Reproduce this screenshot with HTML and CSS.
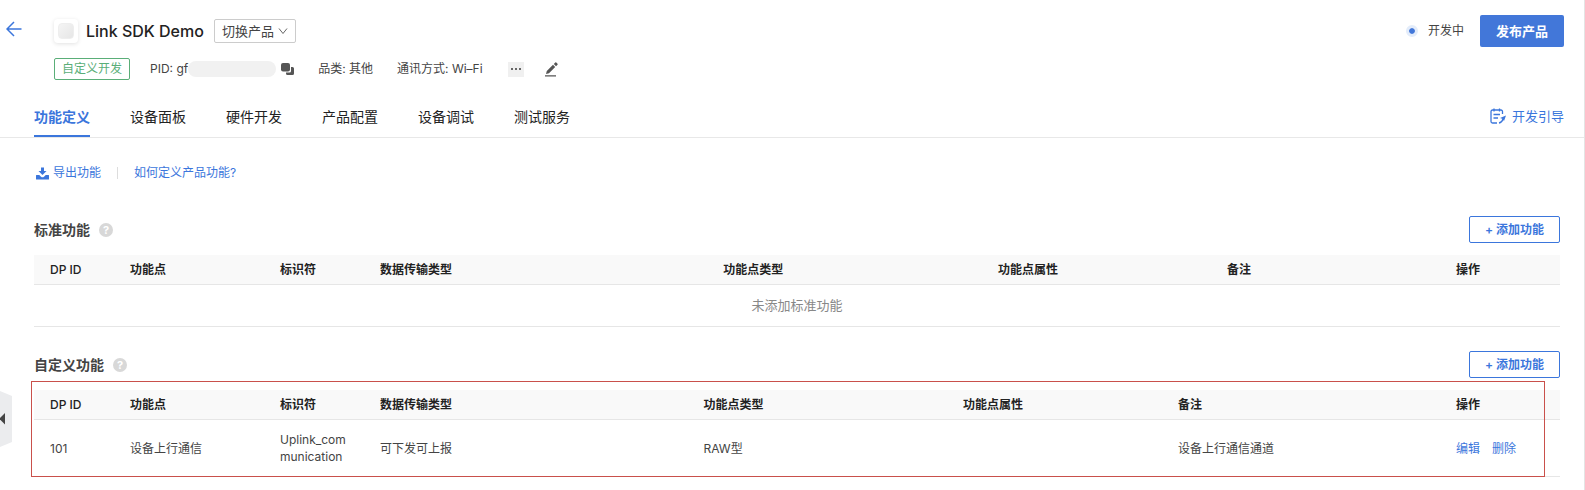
FILE: index.html
```html
<!DOCTYPE html>
<html lang="zh-CN">
    <head>
        <meta charset="utf-8">
        <title>Link SDK Demo</title>
        <link rel="stylesheet" href="styles.css">
    </head>
    <body>
        <div class="page">
            <header class="header">
                <a href="#" class="back" aria-label="返回">
                    <svg width="16" height="16" viewBox="0 0 16 16"><path d="M15.5 8H1M8 1L1 8l7 7"/></svg>
                </a>
                <div class="info">
                    <div class="title-row">
                        <span class="logo"></span>
                        <h1>Link SDK Demo</h1>
                        <label class="switch">
                            <select aria-label="切换产品">
                                <option>切换产品</option>
                            </select>
                            <svg width="10" height="8" viewBox="0 0 10 8"><path d="M1 1.5l4 5 4-5"/></svg>
                        </label>
                    </div>
                    <div class="meta-row">
                        <span class="tag">自定义开发</span>
                        <span class="pid">PID: gf<span class="mask"></span>
                            <svg width="13" height="13" viewBox="0 0 13 13"><path d="M10 4h1.500A1.500 1.500 0 0 1 13 5.500v5a1.500 1.500 0 0 1-1.500 1.500h-5A1.500 1.500 0 0 1 5 10.500V9.500h3.500A1.500 1.500 0 0 0 10 8z"/><rect x="0" y="0" width="9" height="8.500" rx="2"/></svg>
                        </span>
                        <span class="category">品类: 其他</span>
                        <span class="network">通讯方式: Wi–Fi</span>
                        <button class="more" aria-label="更多"><i></i><i></i><i></i></button>
                        <button class="edit" aria-label="编辑">
                            <svg width="13" height="15" viewBox="0 0 13 15"><path d="M0 13.200h11v1.300H0zM1 12l.8-3L8 2.800l2.200 2.200L4 11.200zM8.800 2L10.300.6q.5-.5 1 0l1.200 1.200q.5.500 0 1L11 4.200z"/></svg>
                        </button>
                    </div>
                </div>
                <div class="actions">
                    <span class="status">开发中</span>
                    <button class="publish">发布产品</button>
                </div>
            </header>

            <nav class="tabs">
                <a href="#" class="active">功能定义</a>
                <a href="#">设备面板</a>
                <a href="#">硬件开发</a>
                <a href="#">产品配置</a>
                <a href="#">设备调试</a>
                <a href="#">测试服务</a>
                <a href="#" class="guide">
                    <svg width="16" height="16" viewBox="0 0 16 16"><path d="M12.500 6V3.500A1.500 1.500 0 0 0 11 2H2.500A1.500 1.500 0 0 0 1 3.500v10A1.500 1.500 0 0 0 2.500 15H7M4 .5v3M9.500 .5v3M3.500 6.500h6.500M3.500 10h4.500M9 15q3-.5 4-4"/><path class="fill" d="M16 7.500l-6 2.500 2.200.8L14 13z"/></svg>
                    开发引导
                </a>
            </nav>

            <main class="content">
                <div class="toolbar">
                    <a href="#" class="export">
                        <svg width="13" height="13" viewBox="0 0 13 13"><path d="M5 0.500h3V4h2.500l-4 4-4-4H5zM.5 8h2.800l1.700 1.800q1.500 1 3 0L9.700 8h2.800q.5 0 .5.500v3.500q0 .5-.5.500H.5q-.5 0-.5-.5V8.500q0-.5.500-.5z"/></svg>
                        导出功能
                    </a>
                    <a href="#" class="how">如何定义产品功能?</a>
                </div>

                <section>
                    <div class="section-head">
                        <h2>标准功能</h2>
                        <span class="help">?</span>
                        <button class="add">+ 添加功能</button>
                    </div>
                    <table class="standard">
                        <colgroup>
                            <col class="id"><col class="name"><col class="code"><col class="transfer"><col class="type"><col class="attr"><col><col class="operate">
                        </colgroup>
                        <thead>
                            <tr>
                                <th class="latin">DP ID</th>
                                <th>功能点</th>
                                <th>标识符</th>
                                <th>数据传输类型</th>
                                <th>功能点类型</th>
                                <th>功能点属性</th>
                                <th>备注</th>
                                <th>操作</th>
                            </tr>
                        </thead>
                        <tbody>
                            <tr>
                                <td colspan="8" class="empty">未添加标准功能</td>
                            </tr>
                        </tbody>
                    </table>
                </section>

                <section>
                    <div class="section-head">
                        <h2>自定义功能</h2>
                        <span class="help">?</span>
                        <button class="add">+ 添加功能</button>
                    </div>
                    <div class="marked">
                        <table class="custom">
                            <colgroup>
                                <col class="id"><col class="name"><col class="code"><col class="transfer"><col class="type"><col class="attr"><col><col class="operate">
                            </colgroup>
                            <thead>
                                <tr>
                                    <th class="latin">DP ID</th>
                                    <th>功能点</th>
                                    <th>标识符</th>
                                    <th>数据传输类型</th>
                                    <th>功能点类型</th>
                                    <th>功能点属性</th>
                                    <th>备注</th>
                                    <th>操作</th>
                                </tr>
                            </thead>
                            <tbody>
                                <tr>
                                    <td>101</td>
                                    <td>设备上行通信</td>
                                    <td>Uplink_communication</td>
                                    <td>可下发可上报</td>
                                    <td>RAW型</td>
                                    <td></td>
                                    <td>设备上行通信通道</td>
                                    <td><a href="#">编辑</a><a href="#">删除</a></td>
                                </tr>
                            </tbody>
                        </table>
                    </div>
                </section>
            </main>

            <button class="handle" aria-label="展开">
                <svg width="12" height="56" viewBox="0 0 12 56"><path class="bg" d="M0 0l12 5v46L0 56z"/><path class="arrow" d="M5 22v11.500L0 28.500v-1.500z"/></svg>
            </button>
        </div>
    </body>
</html>
```
FILE: styles.css
```css
*, *::before, *::after {
    box-sizing: border-box;
}
body {
    margin: 0;
    background-color: white;
    color: #444;
    font-family: Inter, "Noto Sans CJK SC", sans-serif;
    font-size: 12px;
    line-height: 16px;
}
a {
    color: #3b76dc;
    text-decoration: none;
}
button, select {
    margin: 0;
    padding: 0;
    border: none;
    background: none;
    color: inherit;
    font: inherit;
    cursor: pointer;
}
svg {
    display: block;
    flex: none;
}
.page {
    position: relative;
    min-height: 100vh;
    border-right: 1px solid #e4e4e4;
}

/* header */
.header {
    display: flex;
    align-items: flex-start;
    padding: 15px 20px 0 6px;
}
.back {
    margin: 6px 32px 0 0;
}
.back svg {
    fill: none;
    stroke: #3b76dc;
    stroke-width: 1.5;
}
.info {
    flex: 1;
}
.title-row {
    display: flex;
    align-items: center;
    height: 32px;
}
.logo {
    width: 24px;
    height: 24px;
    padding: 4px;
    border-radius: 4px;
    box-shadow: 0 1px 4px rgba(0, 0, 0, 0.12);
}
.logo::before {
    content: "";
    display: block;
    height: 16px;
    border-radius: 4px;
    border: 1px solid #eee;
    background: linear-gradient(135deg, #f4f4f4, #e6e6e6);
}
h1 {
    margin: 0 10px 0 8px;
    color: #222;
    font-size: 16px;
    font-weight: 500;
    line-height: 24px;
}
.switch {
    display: grid;
    align-items: center;
}
.switch select {
    grid-area: 1 / 1;
    appearance: none;
    width: 82px;
    height: 24px;
    padding: 0 16px 0 7px;
    border: 1px solid #ccc;
    border-radius: 2px;
    font-size: 13px;
}
.switch svg {
    grid-area: 1 / 1;
    justify-self: end;
    margin-right: 8px;
    fill: none;
    stroke: #666;
    pointer-events: none;
}
.meta-row {
    display: flex;
    align-items: center;
    margin-top: 11px;
    height: 22px;
}
.tag {
    padding: 2px 7px;
    border: 1px solid #5aae78;
    border-radius: 2px;
    color: #5aae78;
}
.pid {
    display: flex;
    align-items: center;
    margin-left: 20px;
}
.mask {
    width: 88px;
    height: 16px;
    margin-right: 5px;
    border-radius: 8px;
    background-color: #f1f1f1;
}
.meta-row svg {
    fill: #555;
}
.category {
    margin-left: 24px;
}
.network {
    margin-left: 24px;
}
.more {
    display: flex;
    align-items: center;
    justify-content: center;
    gap: 2px;
    width: 16px;
    height: 15px;
    margin-left: 25px;
    background-color: #f0f0f0;
}
.more i {
    width: 2px;
    height: 2px;
    background-color: #666;
}
.edit {
    margin-left: 21px;
}
.actions {
    display: flex;
    align-items: center;
    gap: 16px;
}
.status {
    display: flex;
    align-items: center;
    gap: 10px;
}
.status::before {
    content: "";
    width: 12px;
    height: 12px;
    border: 3px solid #e3ecfa;
    border-radius: 50%;
    background: #4277d9 padding-box;
}
.publish {
    width: 84px;
    height: 32px;
    border-radius: 2px;
    background-color: #4277d9;
    color: white;
    font-size: 13px;
    font-weight: 600;
}

/* tabs */
.tabs {
    display: flex;
    gap: 40px;
    margin-top: 17px;
    padding: 0 20px 0 34px;
    border-bottom: 1px solid #e8e8e8;
}
.tabs a {
    height: 40px;
    border-bottom: 2px solid transparent;
    color: #222;
    font-size: 14px;
    line-height: 40px;
}
.tabs .active {
    border-color: #3b76dc;
    color: #3b76dc;
    font-weight: 600;
}
.tabs .guide {
    display: flex;
    align-items: center;
    gap: 6px;
    margin-left: auto;
    color: #3b76dc;
    font-size: 13px;
}
.guide svg {
    fill: none;
    stroke: #3b76dc;
    stroke-width: 1.3;
}
.guide .fill {
    fill: #3b76dc;
    stroke: none;
}

/* content */
.content {
    padding: 27px 24px 0 34px;
}
.toolbar {
    display: flex;
    align-items: center;
    height: 16px;
}
.export {
    display: flex;
    align-items: center;
    gap: 4px;
    padding: 0 16px 0 2px;
}
.export svg {
    fill: #3b76dc;
}
.how {
    display: flex;
    align-items: center;
}
.how::before {
    content: "";
    width: 1px;
    height: 12px;
    margin-right: 16px;
    background-color: #ddd;
}
section {
    margin-bottom: 24px;
}
.toolbar + section {
    margin-top: 35px;
}
.section-head {
    display: flex;
    align-items: center;
    margin-bottom: 12px;
}
h2 {
    margin: 0 9px 0 0;
    color: #444;
    font-size: 14px;
    font-weight: 600;
    line-height: 24px;
}
.help {
    width: 14px;
    height: 14px;
    border-radius: 50%;
    background-color: #d8d8d8;
    color: white;
    font-size: 11px;
    font-weight: 700;
    line-height: 14px;
    text-align: center;
}
.add {
    width: 91px;
    height: 27px;
    margin-left: auto;
    border: 1px solid #3b76dc;
    border-radius: 2px;
    color: #3b76dc;
    font-weight: 600;
}
table {
    width: 100%;
    table-layout: fixed;
    border-collapse: separate;
    border-spacing: 0;
}
th, td {
    padding: 0 16px;
    border-bottom: 1px solid #e6e6e6;
    text-align: left;
}
th {
    height: 30px;
    background-color: #f9f9f9;
    color: #222;
    font-weight: 600;
}
th.latin {
    font-weight: 500;
}
td {
    height: 57px;
    line-height: 17px;
    word-break: break-all;
}
td a + a {
    margin-left: 12px;
}
td.empty {
    height: 42px;
    color: #888;
    font-size: 13px;
    text-align: center;
}
.id {
    width: 80px;
}
.name {
    width: 150px;
}
.code {
    width: 100px;
}
.operate {
    width: 120px;
}
.standard .transfer {
    width: 22.5%;
}
.standard .type {
    width: 18%;
}
.standard .attr {
    width: 15%;
}
.custom .transfer {
    width: 21.2%;
}
.custom .type {
    width: 17%;
}
.custom .attr {
    width: 14.1%;
}

/* red frame over the custom table */
.marked {
    position: relative;
}
.marked::after {
    content: "";
    position: absolute;
    inset: -9px 15px 0 -3px;
    border: 1px solid #c9504b;
    pointer-events: none;
}

/* sidebar handle */
.handle {
    position: absolute;
    left: 0;
    top: 391px;
}
.handle .bg {
    fill: #ebecee;
}
.handle .arrow {
    fill: #444;
}
```
